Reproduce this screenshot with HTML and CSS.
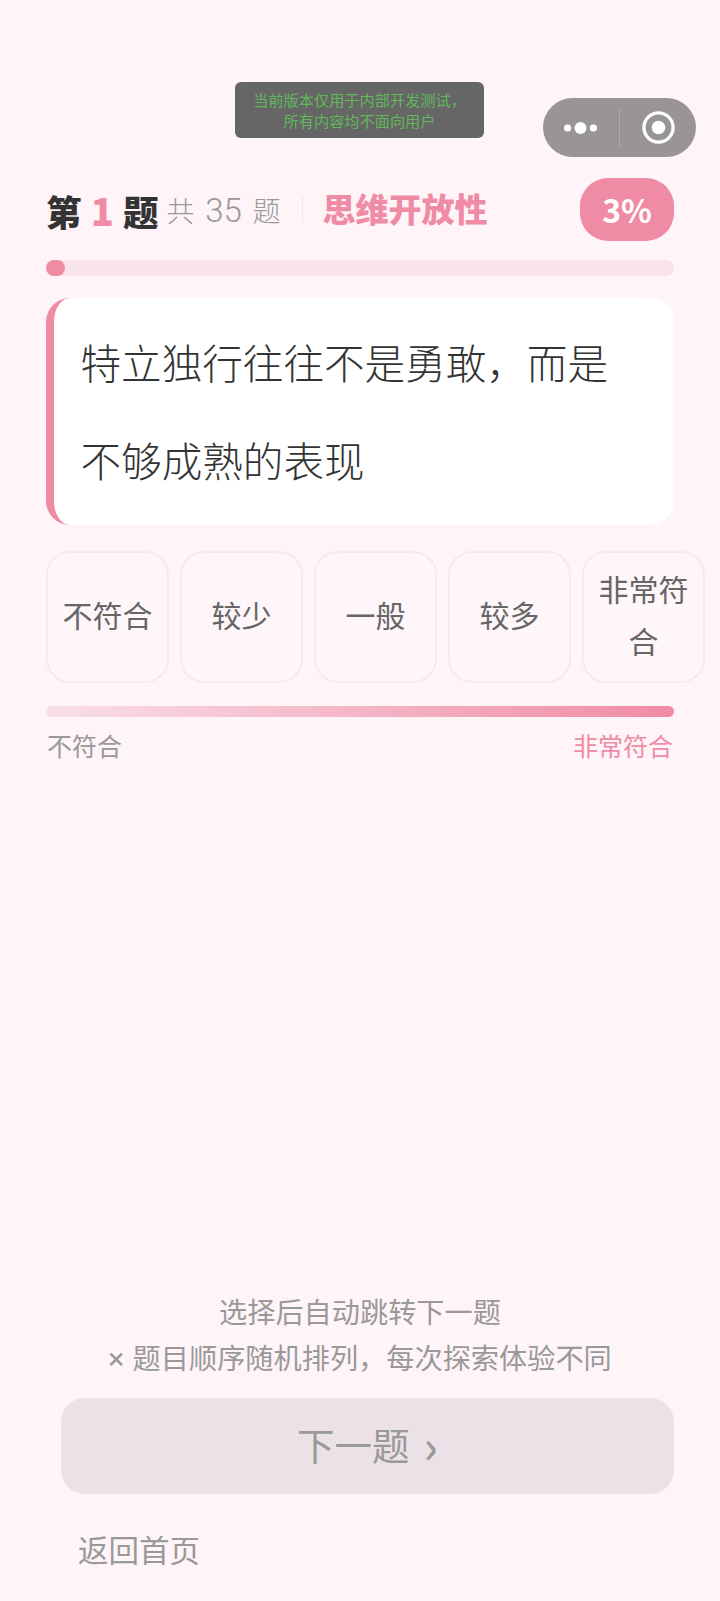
FILE: index.html
```html
<!DOCTYPE html>
<html lang="zh-CN">
<head>
<meta charset="utf-8">
<title>答题</title>
<link rel="stylesheet" href="styles.css">
</head>
<body>
<div class="toast">当前版本仅用于内部开发测试，<br>所有内容均不面向用户</div>
<div class="capsule">
  <svg class="cap-dots" viewBox="0 0 33 14" aria-hidden="true"><circle cx="3.6" cy="7" r="3.6"/><circle cx="16.5" cy="7" r="6"/><circle cx="29.4" cy="7" r="3.6"/></svg>
  <span class="cap-line"></span>
  <svg class="cap-rec" viewBox="0 0 34 34" aria-hidden="true"><circle cx="17" cy="17" r="15" fill="none" stroke="#fff" stroke-width="3.4"/><circle cx="17" cy="17" r="7" fill="#fff"/></svg>
</div>
<main class="page">
  <header class="head">
    <span class="q-no">第 <em>1</em> 题</span>
    <span class="q-total">共 <span class="num">35</span> 题</span>
    <span class="divider"></span>
    <span class="dim">思维开放性</span>
    <span class="pct">3%</span>
  </header>
  <div class="track"><div class="fill" style="width:3%"></div></div>
  <section class="card">特立独行往往不是勇敢，而是不够成熟的表现</section>
  <div class="options">
    <div class="opt">不符合</div>
    <div class="opt">较少</div>
    <div class="opt">一般</div>
    <div class="opt">较多</div>
    <div class="opt">非常符合</div>
  </div>
  <div class="scale"></div>
  <div class="scale-labels"><span>不符合</span><span class="hi">非常符合</span></div>
  <div class="spacer"></div>
  <p class="hint">选择后自动跳转下一题</p>
  <p class="hint"><span class="times">×</span> 题目顺序随机排列，每次探索体验不同</p>
  <div class="next">下一题<span class="chev">›</span></div>
  <div class="back">返回首页</div>
</main>
</body>
</html>
```
FILE: styles.css
```css
* { box-sizing: border-box; }
html, body { margin: 0; height: 100%; }
body {
  background: #fff4f8;
  font-family: "Noto Sans CJK SC", "Noto Sans", sans-serif;
  color: #333;
  position: relative;
  overflow: hidden;
}
.toast {
  position: absolute;
  left: 235px;
  top: 82px;
  width: 249px;
  height: 56px;
  background: #666;
  border-radius: 6px;
  color: #5fb95a;
  font-size: 15.2px;
  line-height: 21px;
  text-align: center;
  padding-top: 7px;
}
.capsule {
  position: absolute;
  left: 543px;
  top: 98px;
  width: 153px;
  height: 59px;
  border-radius: 30px;
  background: #999595;
  display: flex;
  align-items: center;
}
.cap-dots { width: 33px; height: 14px; fill: #fff; margin-left: 21px; flex: none; }
.cap-line { width: 1px; height: 39px; background: #aeaaaa; margin-left: 22px; flex: none; }
.cap-rec { width: 33px; height: 33px; margin-left: 22px; flex: none; }
.page {
  height: 1601px;
  padding: 178px 46px 0;
  display: flex;
  flex-direction: column;
}
.head { display: flex; align-items: center; height: 63px; }
.q-no { font-size: 35.5px; font-weight: 900; color: #333; white-space: nowrap; line-height: 1; }
.q-no em { font-style: normal; font-size: 38px; margin: 0 1px; color: #f08ba5; }
.q-total { font-size: 28px; font-weight: 300; color: #999; margin-left: 8px; white-space: nowrap; }
.num { font-family: Roboto, sans-serif; font-size: 33px; font-weight: 300; margin: 0 4.5px; }
.divider { width: 1px; height: 26px; background: #f2e3e8; margin: 0 19px 0 22px; }
.dim { font-size: 33px; font-weight: 900; color: #f08ba5; white-space: nowrap; padding-bottom: 3px; }
.pct {
  margin-left: auto;
  width: 94px;
  height: 63px;
  border-radius: 28px;
  background: #f08ba5;
  color: #fff;
  font-size: 32px;
  font-weight: 700;
  display: flex;
  align-items: center;
  justify-content: center;
  padding-bottom: 2px;
}
.track { height: 16px; margin-top: 19px; border-radius: 8px; background: #f9e3ea; }
.fill { height: 100%; border-radius: 8px; background: #f08ba5; }
.card {
  margin-top: 22px;
  height: 227px;
  padding: 15px 50px 0 26.5px;
  background: #fff;
  border-left: 8px solid #f08ba5;
  border-radius: 24px;
  font-size: 40.6px;
  font-weight: 300;
  line-height: 98px;
  color: #333;
}
.options { display: flex; gap: 11px; margin-top: 26px; width: 660px; }
.opt {
  flex: 0 0 123px;
  height: 132px;
  border: 2px solid #f9e8ee;
  border-radius: 24px;
  background: #fff6f9;
  color: #666;
  font-size: 30px;
  line-height: 52px;
  display: flex;
  align-items: center;
  justify-content: center;
  text-align: center;
  padding: 0 14px 6px;
}
.scale { height: 11px; margin-top: 23px; border-radius: 6px; background: linear-gradient(90deg, #f9dfe7, #f08ba5); }
.scale-labels { display: flex; justify-content: space-between; margin-top: 10px; padding: 0 1px; font-size: 25px; line-height: 36px; color: #999; }
.hi { color: #f08ba5; }
.spacer { flex: 1; }
.hint { margin: 0; text-align: center; font-size: 28.2px; line-height: 46px; color: #999; }
.times { font-family: Roboto, sans-serif; font-size: 30px; margin-right: 2px; }
.next {
  margin: 16px 0 0 15px;
  height: 96px;
  border-radius: 24px;
  background: #ece1e6;
  color: #999;
  font-size: 37.5px;
  display: flex;
  align-items: center;
  justify-content: center;
  padding-bottom: 5px;
}
.chev { margin-left: 14px; font-size: 46px; line-height: 1; font-weight: 500; }
.back { margin: 33px 0 30px 32px; font-size: 30.5px; line-height: 44px; color: #999; }
```
